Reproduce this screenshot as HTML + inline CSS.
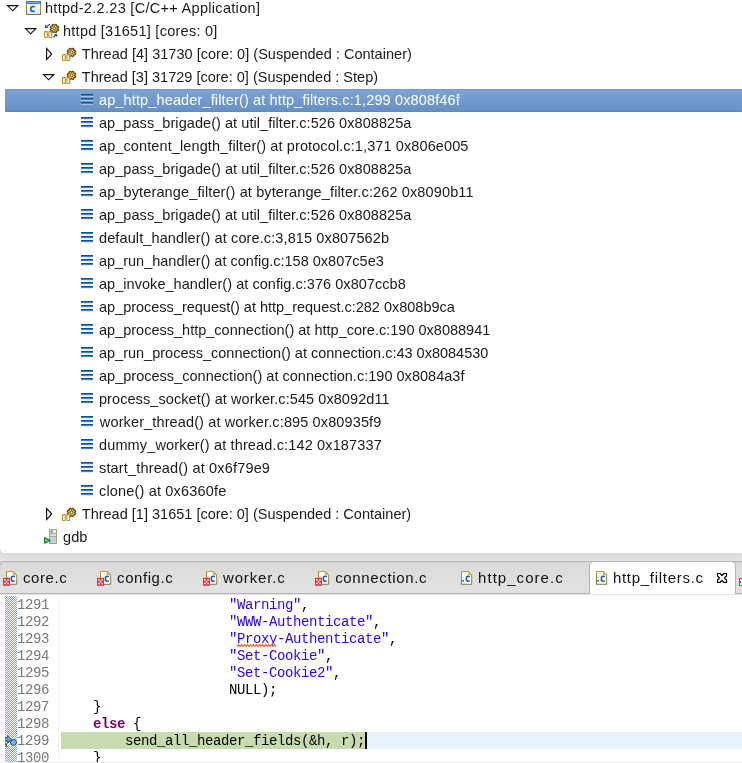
<!DOCTYPE html><html><head><meta charset="utf-8"><style>
*{margin:0;padding:0;box-sizing:border-box}
html,body{width:742px;height:763px;overflow:hidden;background:#fff}
body{position:relative;font-family:"Liberation Sans",sans-serif}
.t{position:absolute;white-space:pre;line-height:20px}
.m{position:absolute;white-space:pre;line-height:17px;font-family:"Liberation Mono",monospace;font-size:14px;letter-spacing:-0.4px}
svg{position:absolute;overflow:visible}
.abs{position:absolute}
</style></head><body><div id="root" style="position:absolute;left:0;top:0;width:742px;height:763px;will-change:transform"><div class="abs" style="left:5px;top:89px;width:737px;height:23px;background:linear-gradient(#7ea3d4,#6690c4);border-top:1px solid #7399cc;border-bottom:1px solid #5e8ac2"></div>
<svg style="left:7px;top:5px" width="12" height="7"><path d="M0.5 0.6 H10.8 L5.65 5.8 Z" fill="none" stroke="#111" stroke-width="1.15"/></svg>
<svg style="left:26px;top:1px" width="16" height="16"><defs><linearGradient id="capg" x1="0" y1="0" x2="0" y2="1"><stop offset="0" stop-color="#eefaff"/><stop offset="1" stop-color="#d8f0fa"/></linearGradient><linearGradient id="capb" x1="0" y1="0" x2="1" y2="0"><stop offset="0" stop-color="#3c7cc8"/><stop offset="1" stop-color="#5a90d0"/></linearGradient><linearGradient id="capo" x1="0" y1="0" x2="0" y2="1"><stop offset="0" stop-color="#c89a30"/><stop offset="1" stop-color="#8a7838"/></linearGradient></defs><rect x="0.5" y="0.5" width="14" height="13" fill="url(#capg)" stroke="url(#capo)"/><rect x="0" y="0" width="15" height="3" fill="#3f74c0"/><rect x="1" y="1.2" width="13" height="0.9" fill="#86c4f0"/><path d="M8.5 6.3 C8.2 5.7 7.7 5.5 7.0 5.5 C5.6 5.5 4.8 6.5 4.8 8.0 C4.8 9.6 5.6 10.5 7.0 10.5 C7.7 10.5 8.2 10.3 8.5 9.7" fill="none" stroke="#1f5ea6" stroke-width="1.6"/></svg>
<div class="t" style="left:44.98px;top:-2.10px;font-size:14.50px;letter-spacing:0.303px;color:#1a1a1a;">httpd-2.2.23 [C/C++ Application]</div>
<svg style="left:25px;top:28px" width="12" height="7"><path d="M0.5 0.6 H10.8 L5.65 5.8 Z" fill="none" stroke="#111" stroke-width="1.15"/></svg>
<svg style="left:44px;top:20px" width="16" height="20"><circle cx="10.45" cy="8.50" r="3.01" fill="#5a3a10" stroke="#5a3a10" stroke-width="0.8"/><rect x="9.45" y="4.20" width="2.00" height="4.30" fill="#5a3a10" transform="rotate(22.5 10.45 8.50)" stroke="#5a3a10" stroke-width="0.8"/><rect x="9.45" y="4.20" width="2.00" height="4.30" fill="#5a3a10" transform="rotate(67.5 10.45 8.50)" stroke="#5a3a10" stroke-width="0.8"/><rect x="9.45" y="4.20" width="2.00" height="4.30" fill="#5a3a10" transform="rotate(112.5 10.45 8.50)" stroke="#5a3a10" stroke-width="0.8"/><rect x="9.45" y="4.20" width="2.00" height="4.30" fill="#5a3a10" transform="rotate(157.5 10.45 8.50)" stroke="#5a3a10" stroke-width="0.8"/><rect x="9.45" y="4.20" width="2.00" height="4.30" fill="#5a3a10" transform="rotate(202.5 10.45 8.50)" stroke="#5a3a10" stroke-width="0.8"/><rect x="9.45" y="4.20" width="2.00" height="4.30" fill="#5a3a10" transform="rotate(247.5 10.45 8.50)" stroke="#5a3a10" stroke-width="0.8"/><rect x="9.45" y="4.20" width="2.00" height="4.30" fill="#5a3a10" transform="rotate(292.5 10.45 8.50)" stroke="#5a3a10" stroke-width="0.8"/><rect x="9.45" y="4.20" width="2.00" height="4.30" fill="#5a3a10" transform="rotate(337.5 10.45 8.50)" stroke="#5a3a10" stroke-width="0.8"/><circle cx="10.45" cy="8.50" r="2.65" fill="#f8c030"/><rect x="9.85" y="5.10" width="1.20" height="3.40" fill="#f8c030" transform="rotate(22.5 10.45 8.50)"/><rect x="9.85" y="5.10" width="1.20" height="3.40" fill="#f8c030" transform="rotate(67.5 10.45 8.50)"/><rect x="9.85" y="5.10" width="1.20" height="3.40" fill="#f8c030" transform="rotate(112.5 10.45 8.50)"/><rect x="9.85" y="5.10" width="1.20" height="3.40" fill="#f8c030" transform="rotate(157.5 10.45 8.50)"/><rect x="9.85" y="5.10" width="1.20" height="3.40" fill="#f8c030" transform="rotate(202.5 10.45 8.50)"/><rect x="9.85" y="5.10" width="1.20" height="3.40" fill="#f8c030" transform="rotate(247.5 10.45 8.50)"/><rect x="9.85" y="5.10" width="1.20" height="3.40" fill="#f8c030" transform="rotate(292.5 10.45 8.50)"/><rect x="9.85" y="5.10" width="1.20" height="3.40" fill="#f8c030" transform="rotate(337.5 10.45 8.50)"/><circle cx="10.45" cy="8.50" r="1.4" fill="#fff" stroke="#3a2a20" stroke-width="0.8"/><rect x="0.5" y="11.6" width="2.8" height="5.8" rx="0.4" fill="#fffbe0" stroke="#b8901c" stroke-width="1.05"/><rect x="4.9" y="11.6" width="2.8" height="5.8" rx="0.4" fill="#fffbe0" stroke="#b8901c" stroke-width="1.05"/><path d="M2.6 6.4 L6 4.3" stroke="#0a4a9a" stroke-width="1.2" fill="none"/><path d="M1 4.8 V8 H4.2 Z" fill="#0a4a9a"/><path d="M9.1 17.4 L11.8 15.2" stroke="#0a4a9a" stroke-width="1.2" fill="none"/><path d="M10 13.9 H13.1 V17 Z" fill="#0a4a9a"/></svg>
<div class="t" style="left:62.98px;top:20.90px;font-size:14.50px;letter-spacing:0.263px;color:#1a1a1a;">httpd [31651] [cores: 0]</div>
<svg style="left:46px;top:48px" width="7" height="12"><path d="M0.6 0.4 V11.6 L5.7 6 Z" fill="none" stroke="#111" stroke-width="1.15"/></svg>
<svg style="left:62px;top:43px" width="16" height="20"><circle cx="9.50" cy="9.40" r="3.01" fill="#5a3a10" stroke="#5a3a10" stroke-width="0.8"/><rect x="8.50" y="5.10" width="2.00" height="4.30" fill="#5a3a10" transform="rotate(22.5 9.50 9.40)" stroke="#5a3a10" stroke-width="0.8"/><rect x="8.50" y="5.10" width="2.00" height="4.30" fill="#5a3a10" transform="rotate(67.5 9.50 9.40)" stroke="#5a3a10" stroke-width="0.8"/><rect x="8.50" y="5.10" width="2.00" height="4.30" fill="#5a3a10" transform="rotate(112.5 9.50 9.40)" stroke="#5a3a10" stroke-width="0.8"/><rect x="8.50" y="5.10" width="2.00" height="4.30" fill="#5a3a10" transform="rotate(157.5 9.50 9.40)" stroke="#5a3a10" stroke-width="0.8"/><rect x="8.50" y="5.10" width="2.00" height="4.30" fill="#5a3a10" transform="rotate(202.5 9.50 9.40)" stroke="#5a3a10" stroke-width="0.8"/><rect x="8.50" y="5.10" width="2.00" height="4.30" fill="#5a3a10" transform="rotate(247.5 9.50 9.40)" stroke="#5a3a10" stroke-width="0.8"/><rect x="8.50" y="5.10" width="2.00" height="4.30" fill="#5a3a10" transform="rotate(292.5 9.50 9.40)" stroke="#5a3a10" stroke-width="0.8"/><rect x="8.50" y="5.10" width="2.00" height="4.30" fill="#5a3a10" transform="rotate(337.5 9.50 9.40)" stroke="#5a3a10" stroke-width="0.8"/><circle cx="9.50" cy="9.40" r="2.65" fill="#f8c030"/><rect x="8.90" y="6.00" width="1.20" height="3.40" fill="#f8c030" transform="rotate(22.5 9.50 9.40)"/><rect x="8.90" y="6.00" width="1.20" height="3.40" fill="#f8c030" transform="rotate(67.5 9.50 9.40)"/><rect x="8.90" y="6.00" width="1.20" height="3.40" fill="#f8c030" transform="rotate(112.5 9.50 9.40)"/><rect x="8.90" y="6.00" width="1.20" height="3.40" fill="#f8c030" transform="rotate(157.5 9.50 9.40)"/><rect x="8.90" y="6.00" width="1.20" height="3.40" fill="#f8c030" transform="rotate(202.5 9.50 9.40)"/><rect x="8.90" y="6.00" width="1.20" height="3.40" fill="#f8c030" transform="rotate(247.5 9.50 9.40)"/><rect x="8.90" y="6.00" width="1.20" height="3.40" fill="#f8c030" transform="rotate(292.5 9.50 9.40)"/><rect x="8.90" y="6.00" width="1.20" height="3.40" fill="#f8c030" transform="rotate(337.5 9.50 9.40)"/><circle cx="9.50" cy="9.40" r="1.4" fill="#fff" stroke="#3a2a20" stroke-width="0.8"/><rect x="0.5" y="11.6" width="2.8" height="5.8" rx="0.4" fill="#fffbe0" stroke="#b8901c" stroke-width="1.05"/><rect x="4.9" y="11.6" width="2.8" height="5.8" rx="0.4" fill="#fffbe0" stroke="#b8901c" stroke-width="1.05"/></svg>
<div class="t" style="left:81.78px;top:43.90px;font-size:14.50px;letter-spacing:0.024px;color:#1a1a1a;">Thread [4] 31730 [core: 0] (Suspended : Container)</div>
<svg style="left:43px;top:74px" width="12" height="7"><path d="M0.5 0.6 H10.8 L5.65 5.8 Z" fill="none" stroke="#111" stroke-width="1.15"/></svg>
<svg style="left:62px;top:66px" width="16" height="20"><circle cx="9.50" cy="9.40" r="3.01" fill="#5a3a10" stroke="#5a3a10" stroke-width="0.8"/><rect x="8.50" y="5.10" width="2.00" height="4.30" fill="#5a3a10" transform="rotate(22.5 9.50 9.40)" stroke="#5a3a10" stroke-width="0.8"/><rect x="8.50" y="5.10" width="2.00" height="4.30" fill="#5a3a10" transform="rotate(67.5 9.50 9.40)" stroke="#5a3a10" stroke-width="0.8"/><rect x="8.50" y="5.10" width="2.00" height="4.30" fill="#5a3a10" transform="rotate(112.5 9.50 9.40)" stroke="#5a3a10" stroke-width="0.8"/><rect x="8.50" y="5.10" width="2.00" height="4.30" fill="#5a3a10" transform="rotate(157.5 9.50 9.40)" stroke="#5a3a10" stroke-width="0.8"/><rect x="8.50" y="5.10" width="2.00" height="4.30" fill="#5a3a10" transform="rotate(202.5 9.50 9.40)" stroke="#5a3a10" stroke-width="0.8"/><rect x="8.50" y="5.10" width="2.00" height="4.30" fill="#5a3a10" transform="rotate(247.5 9.50 9.40)" stroke="#5a3a10" stroke-width="0.8"/><rect x="8.50" y="5.10" width="2.00" height="4.30" fill="#5a3a10" transform="rotate(292.5 9.50 9.40)" stroke="#5a3a10" stroke-width="0.8"/><rect x="8.50" y="5.10" width="2.00" height="4.30" fill="#5a3a10" transform="rotate(337.5 9.50 9.40)" stroke="#5a3a10" stroke-width="0.8"/><circle cx="9.50" cy="9.40" r="2.65" fill="#f8c030"/><rect x="8.90" y="6.00" width="1.20" height="3.40" fill="#f8c030" transform="rotate(22.5 9.50 9.40)"/><rect x="8.90" y="6.00" width="1.20" height="3.40" fill="#f8c030" transform="rotate(67.5 9.50 9.40)"/><rect x="8.90" y="6.00" width="1.20" height="3.40" fill="#f8c030" transform="rotate(112.5 9.50 9.40)"/><rect x="8.90" y="6.00" width="1.20" height="3.40" fill="#f8c030" transform="rotate(157.5 9.50 9.40)"/><rect x="8.90" y="6.00" width="1.20" height="3.40" fill="#f8c030" transform="rotate(202.5 9.50 9.40)"/><rect x="8.90" y="6.00" width="1.20" height="3.40" fill="#f8c030" transform="rotate(247.5 9.50 9.40)"/><rect x="8.90" y="6.00" width="1.20" height="3.40" fill="#f8c030" transform="rotate(292.5 9.50 9.40)"/><rect x="8.90" y="6.00" width="1.20" height="3.40" fill="#f8c030" transform="rotate(337.5 9.50 9.40)"/><circle cx="9.50" cy="9.40" r="1.4" fill="#fff" stroke="#3a2a20" stroke-width="0.8"/><rect x="0.5" y="11.6" width="2.8" height="5.8" rx="0.4" fill="#fffbe0" stroke="#b8901c" stroke-width="1.05"/><rect x="4.9" y="11.6" width="2.8" height="5.8" rx="0.4" fill="#fffbe0" stroke="#b8901c" stroke-width="1.05"/></svg>
<div class="t" style="left:81.78px;top:66.90px;font-size:14.50px;letter-spacing:0.010px;color:#1a1a1a;">Thread [3] 31729 [core: 0] (Suspended : Step)</div>
<svg style="left:80px;top:89px" width="16" height="20"><rect x="1" y="5" width="12" height="1" fill="#0b4e9c"/><rect x="1" y="6" width="12" height="1" fill="#4a80c0"/><rect x="1" y="7" width="12" height="0.6" fill="#cfdff0"/><rect x="1" y="9" width="12" height="1" fill="#0b4e9c"/><rect x="1" y="10" width="12" height="1" fill="#4a80c0"/><rect x="1" y="11" width="12" height="0.6" fill="#cfdff0"/><rect x="1" y="13" width="12" height="1" fill="#0b4e9c"/><rect x="1" y="14" width="12" height="1" fill="#4a80c0"/><rect x="1" y="15" width="12" height="0.6" fill="#cfdff0"/></svg>
<div class="t" style="left:98.98px;top:89.90px;font-size:14.50px;letter-spacing:0.138px;color:#fff;">ap_http_header_filter() at http_filters.c:1,299 0x808f46f</div>
<svg style="left:80px;top:112px" width="16" height="20"><rect x="1" y="5" width="12" height="1" fill="#0b4e9c"/><rect x="1" y="6" width="12" height="1" fill="#4a80c0"/><rect x="1" y="7" width="12" height="0.6" fill="#cfdff0"/><rect x="1" y="9" width="12" height="1" fill="#0b4e9c"/><rect x="1" y="10" width="12" height="1" fill="#4a80c0"/><rect x="1" y="11" width="12" height="0.6" fill="#cfdff0"/><rect x="1" y="13" width="12" height="1" fill="#0b4e9c"/><rect x="1" y="14" width="12" height="1" fill="#4a80c0"/><rect x="1" y="15" width="12" height="0.6" fill="#cfdff0"/></svg>
<div class="t" style="left:98.98px;top:112.90px;font-size:14.50px;letter-spacing:0.060px;color:#1a1a1a;">ap_pass_brigade() at util_filter.c:526 0x808825a</div>
<svg style="left:80px;top:135px" width="16" height="20"><rect x="1" y="5" width="12" height="1" fill="#0b4e9c"/><rect x="1" y="6" width="12" height="1" fill="#4a80c0"/><rect x="1" y="7" width="12" height="0.6" fill="#cfdff0"/><rect x="1" y="9" width="12" height="1" fill="#0b4e9c"/><rect x="1" y="10" width="12" height="1" fill="#4a80c0"/><rect x="1" y="11" width="12" height="0.6" fill="#cfdff0"/><rect x="1" y="13" width="12" height="1" fill="#0b4e9c"/><rect x="1" y="14" width="12" height="1" fill="#4a80c0"/><rect x="1" y="15" width="12" height="0.6" fill="#cfdff0"/></svg>
<div class="t" style="left:98.98px;top:135.90px;font-size:14.50px;letter-spacing:0.107px;color:#1a1a1a;">ap_content_length_filter() at protocol.c:1,371 0x806e005</div>
<svg style="left:80px;top:158px" width="16" height="20"><rect x="1" y="5" width="12" height="1" fill="#0b4e9c"/><rect x="1" y="6" width="12" height="1" fill="#4a80c0"/><rect x="1" y="7" width="12" height="0.6" fill="#cfdff0"/><rect x="1" y="9" width="12" height="1" fill="#0b4e9c"/><rect x="1" y="10" width="12" height="1" fill="#4a80c0"/><rect x="1" y="11" width="12" height="0.6" fill="#cfdff0"/><rect x="1" y="13" width="12" height="1" fill="#0b4e9c"/><rect x="1" y="14" width="12" height="1" fill="#4a80c0"/><rect x="1" y="15" width="12" height="0.6" fill="#cfdff0"/></svg>
<div class="t" style="left:98.98px;top:158.90px;font-size:14.50px;letter-spacing:0.060px;color:#1a1a1a;">ap_pass_brigade() at util_filter.c:526 0x808825a</div>
<svg style="left:80px;top:181px" width="16" height="20"><rect x="1" y="5" width="12" height="1" fill="#0b4e9c"/><rect x="1" y="6" width="12" height="1" fill="#4a80c0"/><rect x="1" y="7" width="12" height="0.6" fill="#cfdff0"/><rect x="1" y="9" width="12" height="1" fill="#0b4e9c"/><rect x="1" y="10" width="12" height="1" fill="#4a80c0"/><rect x="1" y="11" width="12" height="0.6" fill="#cfdff0"/><rect x="1" y="13" width="12" height="1" fill="#0b4e9c"/><rect x="1" y="14" width="12" height="1" fill="#4a80c0"/><rect x="1" y="15" width="12" height="0.6" fill="#cfdff0"/></svg>
<div class="t" style="left:98.98px;top:181.90px;font-size:14.50px;letter-spacing:0.129px;color:#1a1a1a;">ap_byterange_filter() at byterange_filter.c:262 0x8090b11</div>
<svg style="left:80px;top:204px" width="16" height="20"><rect x="1" y="5" width="12" height="1" fill="#0b4e9c"/><rect x="1" y="6" width="12" height="1" fill="#4a80c0"/><rect x="1" y="7" width="12" height="0.6" fill="#cfdff0"/><rect x="1" y="9" width="12" height="1" fill="#0b4e9c"/><rect x="1" y="10" width="12" height="1" fill="#4a80c0"/><rect x="1" y="11" width="12" height="0.6" fill="#cfdff0"/><rect x="1" y="13" width="12" height="1" fill="#0b4e9c"/><rect x="1" y="14" width="12" height="1" fill="#4a80c0"/><rect x="1" y="15" width="12" height="0.6" fill="#cfdff0"/></svg>
<div class="t" style="left:98.98px;top:204.90px;font-size:14.50px;letter-spacing:0.060px;color:#1a1a1a;">ap_pass_brigade() at util_filter.c:526 0x808825a</div>
<svg style="left:80px;top:227px" width="16" height="20"><rect x="1" y="5" width="12" height="1" fill="#0b4e9c"/><rect x="1" y="6" width="12" height="1" fill="#4a80c0"/><rect x="1" y="7" width="12" height="0.6" fill="#cfdff0"/><rect x="1" y="9" width="12" height="1" fill="#0b4e9c"/><rect x="1" y="10" width="12" height="1" fill="#4a80c0"/><rect x="1" y="11" width="12" height="0.6" fill="#cfdff0"/><rect x="1" y="13" width="12" height="1" fill="#0b4e9c"/><rect x="1" y="14" width="12" height="1" fill="#4a80c0"/><rect x="1" y="15" width="12" height="0.6" fill="#cfdff0"/></svg>
<div class="t" style="left:98.98px;top:227.90px;font-size:14.50px;letter-spacing:0.111px;color:#1a1a1a;">default_handler() at core.c:3,815 0x807562b</div>
<svg style="left:80px;top:250px" width="16" height="20"><rect x="1" y="5" width="12" height="1" fill="#0b4e9c"/><rect x="1" y="6" width="12" height="1" fill="#4a80c0"/><rect x="1" y="7" width="12" height="0.6" fill="#cfdff0"/><rect x="1" y="9" width="12" height="1" fill="#0b4e9c"/><rect x="1" y="10" width="12" height="1" fill="#4a80c0"/><rect x="1" y="11" width="12" height="0.6" fill="#cfdff0"/><rect x="1" y="13" width="12" height="1" fill="#0b4e9c"/><rect x="1" y="14" width="12" height="1" fill="#4a80c0"/><rect x="1" y="15" width="12" height="0.6" fill="#cfdff0"/></svg>
<div class="t" style="left:98.98px;top:250.90px;font-size:14.50px;letter-spacing:0.006px;color:#1a1a1a;">ap_run_handler() at config.c:158 0x807c5e3</div>
<svg style="left:80px;top:273px" width="16" height="20"><rect x="1" y="5" width="12" height="1" fill="#0b4e9c"/><rect x="1" y="6" width="12" height="1" fill="#4a80c0"/><rect x="1" y="7" width="12" height="0.6" fill="#cfdff0"/><rect x="1" y="9" width="12" height="1" fill="#0b4e9c"/><rect x="1" y="10" width="12" height="1" fill="#4a80c0"/><rect x="1" y="11" width="12" height="0.6" fill="#cfdff0"/><rect x="1" y="13" width="12" height="1" fill="#0b4e9c"/><rect x="1" y="14" width="12" height="1" fill="#4a80c0"/><rect x="1" y="15" width="12" height="0.6" fill="#cfdff0"/></svg>
<div class="t" style="left:98.98px;top:273.90px;font-size:14.50px;letter-spacing:0.047px;color:#1a1a1a;">ap_invoke_handler() at config.c:376 0x807ccb8</div>
<svg style="left:80px;top:296px" width="16" height="20"><rect x="1" y="5" width="12" height="1" fill="#0b4e9c"/><rect x="1" y="6" width="12" height="1" fill="#4a80c0"/><rect x="1" y="7" width="12" height="0.6" fill="#cfdff0"/><rect x="1" y="9" width="12" height="1" fill="#0b4e9c"/><rect x="1" y="10" width="12" height="1" fill="#4a80c0"/><rect x="1" y="11" width="12" height="0.6" fill="#cfdff0"/><rect x="1" y="13" width="12" height="1" fill="#0b4e9c"/><rect x="1" y="14" width="12" height="1" fill="#4a80c0"/><rect x="1" y="15" width="12" height="0.6" fill="#cfdff0"/></svg>
<div class="t" style="left:98.98px;top:296.90px;font-size:14.50px;letter-spacing:-0.009px;color:#1a1a1a;">ap_process_request() at http_request.c:282 0x808b9ca</div>
<svg style="left:80px;top:319px" width="16" height="20"><rect x="1" y="5" width="12" height="1" fill="#0b4e9c"/><rect x="1" y="6" width="12" height="1" fill="#4a80c0"/><rect x="1" y="7" width="12" height="0.6" fill="#cfdff0"/><rect x="1" y="9" width="12" height="1" fill="#0b4e9c"/><rect x="1" y="10" width="12" height="1" fill="#4a80c0"/><rect x="1" y="11" width="12" height="0.6" fill="#cfdff0"/><rect x="1" y="13" width="12" height="1" fill="#0b4e9c"/><rect x="1" y="14" width="12" height="1" fill="#4a80c0"/><rect x="1" y="15" width="12" height="0.6" fill="#cfdff0"/></svg>
<div class="t" style="left:98.98px;top:319.90px;font-size:14.50px;letter-spacing:0.007px;color:#1a1a1a;">ap_process_http_connection() at http_core.c:190 0x8088941</div>
<svg style="left:80px;top:342px" width="16" height="20"><rect x="1" y="5" width="12" height="1" fill="#0b4e9c"/><rect x="1" y="6" width="12" height="1" fill="#4a80c0"/><rect x="1" y="7" width="12" height="0.6" fill="#cfdff0"/><rect x="1" y="9" width="12" height="1" fill="#0b4e9c"/><rect x="1" y="10" width="12" height="1" fill="#4a80c0"/><rect x="1" y="11" width="12" height="0.6" fill="#cfdff0"/><rect x="1" y="13" width="12" height="1" fill="#0b4e9c"/><rect x="1" y="14" width="12" height="1" fill="#4a80c0"/><rect x="1" y="15" width="12" height="0.6" fill="#cfdff0"/></svg>
<div class="t" style="left:98.98px;top:342.90px;font-size:14.50px;letter-spacing:0.001px;color:#1a1a1a;">ap_run_process_connection() at connection.c:43 0x8084530</div>
<svg style="left:80px;top:365px" width="16" height="20"><rect x="1" y="5" width="12" height="1" fill="#0b4e9c"/><rect x="1" y="6" width="12" height="1" fill="#4a80c0"/><rect x="1" y="7" width="12" height="0.6" fill="#cfdff0"/><rect x="1" y="9" width="12" height="1" fill="#0b4e9c"/><rect x="1" y="10" width="12" height="1" fill="#4a80c0"/><rect x="1" y="11" width="12" height="0.6" fill="#cfdff0"/><rect x="1" y="13" width="12" height="1" fill="#0b4e9c"/><rect x="1" y="14" width="12" height="1" fill="#4a80c0"/><rect x="1" y="15" width="12" height="0.6" fill="#cfdff0"/></svg>
<div class="t" style="left:98.98px;top:365.90px;font-size:14.50px;letter-spacing:0.021px;color:#1a1a1a;">ap_process_connection() at connection.c:190 0x8084a3f</div>
<svg style="left:80px;top:388px" width="16" height="20"><rect x="1" y="5" width="12" height="1" fill="#0b4e9c"/><rect x="1" y="6" width="12" height="1" fill="#4a80c0"/><rect x="1" y="7" width="12" height="0.6" fill="#cfdff0"/><rect x="1" y="9" width="12" height="1" fill="#0b4e9c"/><rect x="1" y="10" width="12" height="1" fill="#4a80c0"/><rect x="1" y="11" width="12" height="0.6" fill="#cfdff0"/><rect x="1" y="13" width="12" height="1" fill="#0b4e9c"/><rect x="1" y="14" width="12" height="1" fill="#4a80c0"/><rect x="1" y="15" width="12" height="0.6" fill="#cfdff0"/></svg>
<div class="t" style="left:98.98px;top:388.90px;font-size:14.50px;letter-spacing:0.076px;color:#1a1a1a;">process_socket() at worker.c:545 0x8092d11</div>
<svg style="left:80px;top:411px" width="16" height="20"><rect x="1" y="5" width="12" height="1" fill="#0b4e9c"/><rect x="1" y="6" width="12" height="1" fill="#4a80c0"/><rect x="1" y="7" width="12" height="0.6" fill="#cfdff0"/><rect x="1" y="9" width="12" height="1" fill="#0b4e9c"/><rect x="1" y="10" width="12" height="1" fill="#4a80c0"/><rect x="1" y="11" width="12" height="0.6" fill="#cfdff0"/><rect x="1" y="13" width="12" height="1" fill="#0b4e9c"/><rect x="1" y="14" width="12" height="1" fill="#4a80c0"/><rect x="1" y="15" width="12" height="0.6" fill="#cfdff0"/></svg>
<div class="t" style="left:99.85px;top:411.90px;font-size:14.50px;letter-spacing:0.126px;color:#1a1a1a;">worker_thread() at worker.c:895 0x80935f9</div>
<svg style="left:80px;top:434px" width="16" height="20"><rect x="1" y="5" width="12" height="1" fill="#0b4e9c"/><rect x="1" y="6" width="12" height="1" fill="#4a80c0"/><rect x="1" y="7" width="12" height="0.6" fill="#cfdff0"/><rect x="1" y="9" width="12" height="1" fill="#0b4e9c"/><rect x="1" y="10" width="12" height="1" fill="#4a80c0"/><rect x="1" y="11" width="12" height="0.6" fill="#cfdff0"/><rect x="1" y="13" width="12" height="1" fill="#0b4e9c"/><rect x="1" y="14" width="12" height="1" fill="#4a80c0"/><rect x="1" y="15" width="12" height="0.6" fill="#cfdff0"/></svg>
<div class="t" style="left:98.98px;top:434.90px;font-size:14.50px;letter-spacing:0.146px;color:#1a1a1a;">dummy_worker() at thread.c:142 0x187337</div>
<svg style="left:80px;top:457px" width="16" height="20"><rect x="1" y="5" width="12" height="1" fill="#0b4e9c"/><rect x="1" y="6" width="12" height="1" fill="#4a80c0"/><rect x="1" y="7" width="12" height="0.6" fill="#cfdff0"/><rect x="1" y="9" width="12" height="1" fill="#0b4e9c"/><rect x="1" y="10" width="12" height="1" fill="#4a80c0"/><rect x="1" y="11" width="12" height="0.6" fill="#cfdff0"/><rect x="1" y="13" width="12" height="1" fill="#0b4e9c"/><rect x="1" y="14" width="12" height="1" fill="#4a80c0"/><rect x="1" y="15" width="12" height="0.6" fill="#cfdff0"/></svg>
<div class="t" style="left:98.98px;top:457.90px;font-size:14.50px;letter-spacing:0.164px;color:#1a1a1a;">start_thread() at 0x6f79e9</div>
<svg style="left:80px;top:480px" width="16" height="20"><rect x="1" y="5" width="12" height="1" fill="#0b4e9c"/><rect x="1" y="6" width="12" height="1" fill="#4a80c0"/><rect x="1" y="7" width="12" height="0.6" fill="#cfdff0"/><rect x="1" y="9" width="12" height="1" fill="#0b4e9c"/><rect x="1" y="10" width="12" height="1" fill="#4a80c0"/><rect x="1" y="11" width="12" height="0.6" fill="#cfdff0"/><rect x="1" y="13" width="12" height="1" fill="#0b4e9c"/><rect x="1" y="14" width="12" height="1" fill="#4a80c0"/><rect x="1" y="15" width="12" height="0.6" fill="#cfdff0"/></svg>
<div class="t" style="left:98.98px;top:480.90px;font-size:14.50px;letter-spacing:0.174px;color:#1a1a1a;">clone() at 0x6360fe</div>
<svg style="left:46px;top:508px" width="7" height="12"><path d="M0.6 0.4 V11.6 L5.7 6 Z" fill="none" stroke="#111" stroke-width="1.15"/></svg>
<svg style="left:62px;top:503px" width="16" height="20"><circle cx="9.50" cy="9.40" r="3.01" fill="#5a3a10" stroke="#5a3a10" stroke-width="0.8"/><rect x="8.50" y="5.10" width="2.00" height="4.30" fill="#5a3a10" transform="rotate(22.5 9.50 9.40)" stroke="#5a3a10" stroke-width="0.8"/><rect x="8.50" y="5.10" width="2.00" height="4.30" fill="#5a3a10" transform="rotate(67.5 9.50 9.40)" stroke="#5a3a10" stroke-width="0.8"/><rect x="8.50" y="5.10" width="2.00" height="4.30" fill="#5a3a10" transform="rotate(112.5 9.50 9.40)" stroke="#5a3a10" stroke-width="0.8"/><rect x="8.50" y="5.10" width="2.00" height="4.30" fill="#5a3a10" transform="rotate(157.5 9.50 9.40)" stroke="#5a3a10" stroke-width="0.8"/><rect x="8.50" y="5.10" width="2.00" height="4.30" fill="#5a3a10" transform="rotate(202.5 9.50 9.40)" stroke="#5a3a10" stroke-width="0.8"/><rect x="8.50" y="5.10" width="2.00" height="4.30" fill="#5a3a10" transform="rotate(247.5 9.50 9.40)" stroke="#5a3a10" stroke-width="0.8"/><rect x="8.50" y="5.10" width="2.00" height="4.30" fill="#5a3a10" transform="rotate(292.5 9.50 9.40)" stroke="#5a3a10" stroke-width="0.8"/><rect x="8.50" y="5.10" width="2.00" height="4.30" fill="#5a3a10" transform="rotate(337.5 9.50 9.40)" stroke="#5a3a10" stroke-width="0.8"/><circle cx="9.50" cy="9.40" r="2.65" fill="#f8c030"/><rect x="8.90" y="6.00" width="1.20" height="3.40" fill="#f8c030" transform="rotate(22.5 9.50 9.40)"/><rect x="8.90" y="6.00" width="1.20" height="3.40" fill="#f8c030" transform="rotate(67.5 9.50 9.40)"/><rect x="8.90" y="6.00" width="1.20" height="3.40" fill="#f8c030" transform="rotate(112.5 9.50 9.40)"/><rect x="8.90" y="6.00" width="1.20" height="3.40" fill="#f8c030" transform="rotate(157.5 9.50 9.40)"/><rect x="8.90" y="6.00" width="1.20" height="3.40" fill="#f8c030" transform="rotate(202.5 9.50 9.40)"/><rect x="8.90" y="6.00" width="1.20" height="3.40" fill="#f8c030" transform="rotate(247.5 9.50 9.40)"/><rect x="8.90" y="6.00" width="1.20" height="3.40" fill="#f8c030" transform="rotate(292.5 9.50 9.40)"/><rect x="8.90" y="6.00" width="1.20" height="3.40" fill="#f8c030" transform="rotate(337.5 9.50 9.40)"/><circle cx="9.50" cy="9.40" r="1.4" fill="#fff" stroke="#3a2a20" stroke-width="0.8"/><rect x="0.5" y="11.6" width="2.8" height="5.8" rx="0.4" fill="#fffbe0" stroke="#b8901c" stroke-width="1.05"/><rect x="4.9" y="11.6" width="2.8" height="5.8" rx="0.4" fill="#fffbe0" stroke="#b8901c" stroke-width="1.05"/></svg>
<div class="t" style="left:81.78px;top:503.90px;font-size:14.50px;letter-spacing:0.010px;color:#1a1a1a;">Thread [1] 31651 [core: 0] (Suspended : Container)</div>
<svg style="left:44px;top:526px" width="16" height="20"><rect x="5.5" y="3.5" width="7" height="14" fill="#c8cede" stroke="#a4a48c"/><rect x="6" y="4" width="6" height="3" fill="#e8eaf0"/><rect x="6.6" y="4.6" width="2" height="2" fill="#30a040"/><rect x="6" y="7" width="6" height="0.8" fill="#a4a48c"/><rect x="6" y="8" width="6" height="2" fill="#d8dce8"/><rect x="6" y="10.2" width="6" height="0.8" fill="#a4a48c"/><path d="M0.6 11.5 L6.6 14.4 L0.6 17.3 Z" fill="#6cc070" stroke="#188a2e" stroke-width="1.1" stroke-linejoin="round"/></svg>
<div class="t" style="left:62.98px;top:526.90px;font-size:14.50px;letter-spacing:0.133px;color:#1a1a1a;">gdb</div>
<div class="abs" style="left:0;top:553px;width:742px;height:1px;background:#d8d8d8"></div>
<div class="abs" style="left:0;top:554px;width:742px;height:7px;background:linear-gradient(#dcdcdc,#e5e5e5)"></div>
<div class="abs" style="left:0;top:561px;width:742px;height:1px;background:#b4b4b4"></div>
<div class="abs" style="left:0;top:562px;width:742px;height:31px;background:linear-gradient(#dadada,#e2e2e2)"></div>
<div class="abs" style="left:0;top:593px;width:742px;height:1px;background:#b4b4b4"></div>
<div class="abs" style="left:0;top:594px;width:742px;height:1px;background:#e4e4e4"></div>
<svg style="left:0px;top:548px" width="6" height="20"><path d="M0 0 V5 H4 C2 5 0 3.5 0 0 Z" fill="#d4d4d4"/><path d="M0 13.5 H4 C2 13.5 0 15 0 17.5 Z" fill="#e4e4e4"/><path d="M4 13.5 C2 13.5 0.5 15 0.5 17.5" fill="none" stroke="#b4b4b4" stroke-width="1"/></svg>
<div class="abs" style="left:589px;top:561px;width:147px;height:33px;background:#fff;border:1px solid #b4b4b4;border-bottom:none;border-radius:5px 5px 0 0"></div>
<svg style="left:3px;top:568px" width="16" height="20"><defs><linearGradient id="fg" x1="0" y1="0" x2="0" y2="1"><stop offset="0" stop-color="#c89a30"/><stop offset="1" stop-color="#857438"/></linearGradient></defs><path d="M3.5 3.5 H10.5 L13.7 6.7 V16.3 H3.5 Z" fill="#f2f7fc" stroke="url(#fg)"/><path d="M10.5 3.5 V6.7 H13.7 Z" fill="#e4c878" stroke="#c09a38" stroke-width="0.8"/><path d="M11.6 9.0 C11.3 8.4 10.8 8.2 10.2 8.2 C9.0 8.2 8.3 9.2 8.3 10.8 C8.3 12.4 9.0 13.3 10.2 13.3 C10.8 13.3 11.3 13.1 11.6 12.5" fill="none" stroke="#1f5ea6" stroke-width="1.5"/><rect x="0" y="9.8" width="7" height="8" fill="#dc3448"/><rect x="1.2" y="11.2" width="1.5" height="1.5" fill="#fff"/><rect x="4.3" y="11.2" width="1.5" height="1.5" fill="#fff"/><rect x="2.75" y="13" width="1.5" height="1.5" fill="#fff"/><rect x="1.2" y="14.8" width="1.5" height="1.5" fill="#fff"/><rect x="4.3" y="14.8" width="1.5" height="1.5" fill="#fff"/></svg>
<div class="t" style="left:22.90px;top:568.10px;font-size:15.00px;letter-spacing:0.585px;color:#111;">core.c</div>
<svg style="left:97px;top:568px" width="16" height="20"><defs><linearGradient id="fg" x1="0" y1="0" x2="0" y2="1"><stop offset="0" stop-color="#c89a30"/><stop offset="1" stop-color="#857438"/></linearGradient></defs><path d="M3.5 3.5 H10.5 L13.7 6.7 V16.3 H3.5 Z" fill="#f2f7fc" stroke="url(#fg)"/><path d="M10.5 3.5 V6.7 H13.7 Z" fill="#e4c878" stroke="#c09a38" stroke-width="0.8"/><path d="M11.6 9.0 C11.3 8.4 10.8 8.2 10.2 8.2 C9.0 8.2 8.3 9.2 8.3 10.8 C8.3 12.4 9.0 13.3 10.2 13.3 C10.8 13.3 11.3 13.1 11.6 12.5" fill="none" stroke="#1f5ea6" stroke-width="1.5"/><rect x="0" y="9.8" width="7" height="8" fill="#dc3448"/><rect x="1.2" y="11.2" width="1.5" height="1.5" fill="#fff"/><rect x="4.3" y="11.2" width="1.5" height="1.5" fill="#fff"/><rect x="2.75" y="13" width="1.5" height="1.5" fill="#fff"/><rect x="1.2" y="14.8" width="1.5" height="1.5" fill="#fff"/><rect x="4.3" y="14.8" width="1.5" height="1.5" fill="#fff"/></svg>
<div class="t" style="left:117.10px;top:568.10px;font-size:15.00px;letter-spacing:0.561px;color:#111;">config.c</div>
<svg style="left:203px;top:568px" width="16" height="20"><defs><linearGradient id="fg" x1="0" y1="0" x2="0" y2="1"><stop offset="0" stop-color="#c89a30"/><stop offset="1" stop-color="#857438"/></linearGradient></defs><path d="M3.5 3.5 H10.5 L13.7 6.7 V16.3 H3.5 Z" fill="#f2f7fc" stroke="url(#fg)"/><path d="M10.5 3.5 V6.7 H13.7 Z" fill="#e4c878" stroke="#c09a38" stroke-width="0.8"/><path d="M11.6 9.0 C11.3 8.4 10.8 8.2 10.2 8.2 C9.0 8.2 8.3 9.2 8.3 10.8 C8.3 12.4 9.0 13.3 10.2 13.3 C10.8 13.3 11.3 13.1 11.6 12.5" fill="none" stroke="#1f5ea6" stroke-width="1.5"/><rect x="0" y="9.8" width="7" height="8" fill="#dc3448"/><rect x="1.2" y="11.2" width="1.5" height="1.5" fill="#fff"/><rect x="4.3" y="11.2" width="1.5" height="1.5" fill="#fff"/><rect x="2.75" y="13" width="1.5" height="1.5" fill="#fff"/><rect x="1.2" y="14.8" width="1.5" height="1.5" fill="#fff"/><rect x="4.3" y="14.8" width="1.5" height="1.5" fill="#fff"/></svg>
<div class="t" style="left:222.97px;top:568.10px;font-size:15.00px;letter-spacing:0.850px;color:#111;">worker.c</div>
<svg style="left:315px;top:568px" width="16" height="20"><defs><linearGradient id="fg" x1="0" y1="0" x2="0" y2="1"><stop offset="0" stop-color="#c89a30"/><stop offset="1" stop-color="#857438"/></linearGradient></defs><path d="M3.5 3.5 H10.5 L13.7 6.7 V16.3 H3.5 Z" fill="#f2f7fc" stroke="url(#fg)"/><path d="M10.5 3.5 V6.7 H13.7 Z" fill="#e4c878" stroke="#c09a38" stroke-width="0.8"/><path d="M11.6 9.0 C11.3 8.4 10.8 8.2 10.2 8.2 C9.0 8.2 8.3 9.2 8.3 10.8 C8.3 12.4 9.0 13.3 10.2 13.3 C10.8 13.3 11.3 13.1 11.6 12.5" fill="none" stroke="#1f5ea6" stroke-width="1.5"/><rect x="0" y="9.8" width="7" height="8" fill="#dc3448"/><rect x="1.2" y="11.2" width="1.5" height="1.5" fill="#fff"/><rect x="4.3" y="11.2" width="1.5" height="1.5" fill="#fff"/><rect x="2.75" y="13" width="1.5" height="1.5" fill="#fff"/><rect x="1.2" y="14.8" width="1.5" height="1.5" fill="#fff"/><rect x="4.3" y="14.8" width="1.5" height="1.5" fill="#fff"/></svg>
<div class="t" style="left:335.20px;top:568.10px;font-size:15.00px;letter-spacing:0.643px;color:#111;">connection.c</div>
<svg style="left:458px;top:568px" width="16" height="20"><defs><linearGradient id="fg" x1="0" y1="0" x2="0" y2="1"><stop offset="0" stop-color="#c89a30"/><stop offset="1" stop-color="#857438"/></linearGradient></defs><path d="M3.5 3.5 H10.5 L13.7 6.7 V16.3 H3.5 Z" fill="#f2f7fc" stroke="url(#fg)"/><path d="M10.5 3.5 V6.7 H13.7 Z" fill="#e4c878" stroke="#c09a38" stroke-width="0.8"/><path d="M11.6 9.0 C11.3 8.4 10.8 8.2 10.2 8.2 C9.0 8.2 8.3 9.2 8.3 10.8 C8.3 12.4 9.0 13.3 10.2 13.3 C10.8 13.3 11.3 13.1 11.6 12.5" fill="none" stroke="#1f5ea6" stroke-width="1.5"/><rect x="4.3" y="12" width="1.6" height="1.6" fill="#1f5ea6"/></svg>
<div class="t" style="left:478.10px;top:568.10px;font-size:15.00px;letter-spacing:1.033px;color:#111;">http_core.c</div>
<svg style="left:593px;top:568px" width="16" height="20"><defs><linearGradient id="fg" x1="0" y1="0" x2="0" y2="1"><stop offset="0" stop-color="#c89a30"/><stop offset="1" stop-color="#857438"/></linearGradient></defs><path d="M3.5 3.5 H10.5 L13.7 6.7 V16.3 H3.5 Z" fill="#f2f7fc" stroke="url(#fg)"/><path d="M10.5 3.5 V6.7 H13.7 Z" fill="#e4c878" stroke="#c09a38" stroke-width="0.8"/><path d="M11.6 9.0 C11.3 8.4 10.8 8.2 10.2 8.2 C9.0 8.2 8.3 9.2 8.3 10.8 C8.3 12.4 9.0 13.3 10.2 13.3 C10.8 13.3 11.3 13.1 11.6 12.5" fill="none" stroke="#1f5ea6" stroke-width="1.5"/><rect x="4.3" y="12" width="1.6" height="1.6" fill="#1f5ea6"/></svg>
<div class="t" style="left:612.90px;top:568.10px;font-size:15.00px;letter-spacing:0.712px;color:#111;">http_filters.c</div>
<svg style="left:717px;top:573px" width="11" height="11"><path d="M0.5 0.5 H3 L5 2.5 L7 0.5 H9.5 V3 L7.5 5 L9.5 7 V9.5 H7 L5 7.5 L3 9.5 H0.5 V7 L2.5 5 L0.5 3 Z" fill="#fff" stroke="#000" stroke-width="1.2" stroke-linejoin="round"/></svg>
<div class="abs" style="left:739px;top:578px;width:5px;height:8px;background:#dc3448"></div><div class="abs" style="left:740px;top:579px;width:2px;height:2px;background:#fff"></div><div class="abs" style="left:741px;top:581px;width:1px;height:2px;background:#fff"></div><div class="abs" style="left:740px;top:583px;width:2px;height:2px;background:#fff"></div>
<svg style="left:5px;top:596px" width="12" height="167"><defs><pattern id="chk" width="2" height="2" patternUnits="userSpaceOnUse"><rect width="2" height="2" fill="#fff"/><rect width="1" height="1" fill="#7aa0e6"/><rect x="1" y="1" width="1" height="1" fill="#7aa0e6"/></pattern></defs><rect width="12" height="167" fill="url(#chk)"/></svg>
<div class="abs" style="left:58px;top:596px;width:1px;height:167px;background:#f3f3f3"></div>
<div class="abs" style="left:61px;top:732px;width:681px;height:17px;background:#e8f2fe"></div>
<div class="abs" style="left:61px;top:732px;width:304px;height:17px;background:#c6dbae"></div>
<div class="abs" style="left:365px;top:732px;width:2px;height:17px;background:#000"></div>
<div class="m" style="left:17px;top:597px;color:#787878">1291</div>
<div class="m" style="left:229px;top:597px;color:#2a00ff">&quot;Warning&quot;</div>
<div class="m" style="left:301px;top:597px;color:#000">,</div>
<div class="m" style="left:17px;top:614px;color:#787878">1292</div>
<div class="m" style="left:229px;top:614px;color:#2a00ff">&quot;WWW-Authenticate&quot;</div>
<div class="m" style="left:373px;top:614px;color:#000">,</div>
<div class="m" style="left:17px;top:631px;color:#787878">1293</div>
<div class="m" style="left:229px;top:631px;color:#2a00ff">&quot;Proxy-Authenticate&quot;</div>
<div class="m" style="left:389px;top:631px;color:#000">,</div>
<div class="m" style="left:17px;top:648px;color:#787878">1294</div>
<div class="m" style="left:229px;top:648px;color:#2a00ff">&quot;Set-Cookie&quot;</div>
<div class="m" style="left:325px;top:648px;color:#000">,</div>
<div class="m" style="left:17px;top:665px;color:#787878">1295</div>
<div class="m" style="left:229px;top:665px;color:#2a00ff">&quot;Set-Cookie2&quot;</div>
<div class="m" style="left:333px;top:665px;color:#000">,</div>
<div class="m" style="left:17px;top:682px;color:#787878">1296</div>
<div class="m" style="left:229px;top:682px;color:#000">NULL);</div>
<div class="m" style="left:17px;top:699px;color:#787878">1297</div>
<div class="m" style="left:93px;top:699px;color:#000">}</div>
<div class="m" style="left:17px;top:716px;color:#787878">1298</div>
<div class="m" style="left:93px;top:716px;color:#7f0055;font-weight:bold">else</div>
<div class="m" style="left:125px;top:716px;color:#000"> {</div>
<div class="m" style="left:17px;top:733px;color:#787878">1299</div>
<div class="m" style="left:125px;top:733px;color:#000">send_all_header_fields(&amp;h, r);</div>
<div class="m" style="left:17px;top:750px;color:#787878">1300</div>
<div class="m" style="left:93px;top:750px;color:#000">}</div>
<svg style="left:237px;top:644px" width="42" height="4"><path d="M 0.0 2.5 L 1.5 0.5 L 3.0 2.5 L 4.5 0.5 L 6.0 2.5 L 7.5 0.5 L 9.0 2.5 L 10.5 0.5 L 12.0 2.5 L 13.5 0.5 L 15.0 2.5 L 16.5 0.5 L 18.0 2.5 L 19.5 0.5 L 21.0 2.5 L 22.5 0.5 L 24.0 2.5 L 25.5 0.5 L 27.0 2.5 L 28.5 0.5 L 30.0 2.5 L 31.5 0.5 L 33.0 2.5 L 34.5 0.5 L 36.0 2.5 L 37.5 0.5 L 39.0 2.5" fill="none" stroke="#f26a3a" stroke-width="1.25"/></svg>
<svg style="left:5px;top:733px;overflow:hidden" width="12" height="16"><path d="M-1 4.6 H2.6 V2.3 L6.7 6.3 L2.6 10.3 V8.1 H-1 Z" fill="#fff" stroke="#fff" stroke-width="2.2" stroke-linejoin="miter"/><circle cx="8.5" cy="9.4" r="3.2" fill="#fff" stroke="#fff" stroke-width="1.6"/><defs><linearGradient id="ipg" x1="0" y1="0" x2="0" y2="1"><stop offset="0" stop-color="#8ab8e4"/><stop offset="1" stop-color="#4a84c4"/></linearGradient></defs><path d="M-1 4.6 H2.6 V2.3 L6.7 6.3 L2.6 10.3 V8.1 H-1 Z" fill="url(#ipg)" stroke="#0a4a9a" stroke-width="1"/><circle cx="8.5" cy="9.4" r="3.0" fill="#7eb2de" stroke="#123a70" stroke-width="1"/><path d="M0.6 10.3 L1.8 13.6" stroke="#102040" stroke-width="1.3"/></svg>
<div class="abs" style="left:0;top:762px;width:742px;height:1px;background:#ececec"></div></div></body></html>
